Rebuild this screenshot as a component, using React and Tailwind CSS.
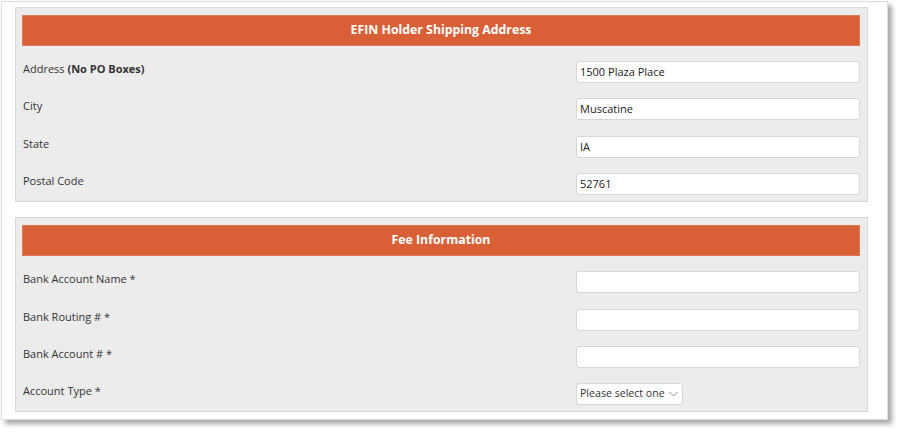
import React from "react";

const font = { fontFamily: '"Open Sans", "Noto Sans", sans-serif' };

function Row({ label, value, select }) {
  return (
    <div className="flex items-start h-[22px]">
      <div className="flex-1 pl-[1px] text-[11px] leading-[15px] text-[#333333]">{label}</div>
      {select ? (
        <div className="w-[284px] flex">
          <div className="w-[107px] h-[22px] bg-white border border-[#d6d6d6] rounded-[3px] flex items-center justify-between pl-[3px] pr-[4px] text-[10.6px] text-[#333] whitespace-nowrap">
            <span>Please select one</span>
            <svg width="9" height="6" viewBox="0 0 9 6" fill="none" stroke="#8a8a8a" strokeWidth="1">
              <path d="M0.5 1 L4.5 5 L8.5 1" />
            </svg>
          </div>
        </div>
      ) : (
        <div className="w-[284px] h-[22px] bg-white border border-[#d6d6d6] rounded-[3px] flex items-center pl-[3px] text-[11px] text-[#222]">
          {value}
        </div>
      )}
    </div>
  );
}

function Panel({ title, children }) {
  return (
    <div className="bg-[#ececec] border border-[#d8d8d8] px-[6px] pt-[7px] pb-[6px] pr-[7px]">
      <div className="h-[31px] bg-[#d96036] border border-[#e07a55] flex items-center justify-center text-white text-[12.3px] font-bold">
        {title}
      </div>
      <div className="mt-[15px] flex flex-col gap-[15.4px]">{children}</div>
    </div>
  );
}

export default function App() {
  return (
    <div className="w-[900px] h-[432px] bg-white relative" style={font}>
      <div className="absolute left-[1px] top-[1px] w-[887px] h-[419px] bg-white border border-[#dcdcdc] shadow-[4px_4px_5px_rgba(0,0,0,0.35)] pl-[13px] pr-[19px] pt-[5px]">
        <Panel title="EFIN Holder Shipping Address">
          <Row
            label={
              <span>
                Address <b className="font-bold">(No PO Boxes)</b>
              </span>
            }
            value="1500 Plaza Place"
          />
          <Row label="City" value="Muscatine" />
          <Row label="State" value="IA" />
          <Row label="Postal Code" value="52761" />
        </Panel>
        <div className="h-[15px]" />
        <Panel title="Fee Information">
          <Row label="Bank Account Name *" value="" />
          <Row label="Bank Routing # *" value="" />
          <Row label="Bank Account # *" value="" />
          <Row label="Account Type *" select />
        </Panel>
      </div>
    </div>
  );
}
